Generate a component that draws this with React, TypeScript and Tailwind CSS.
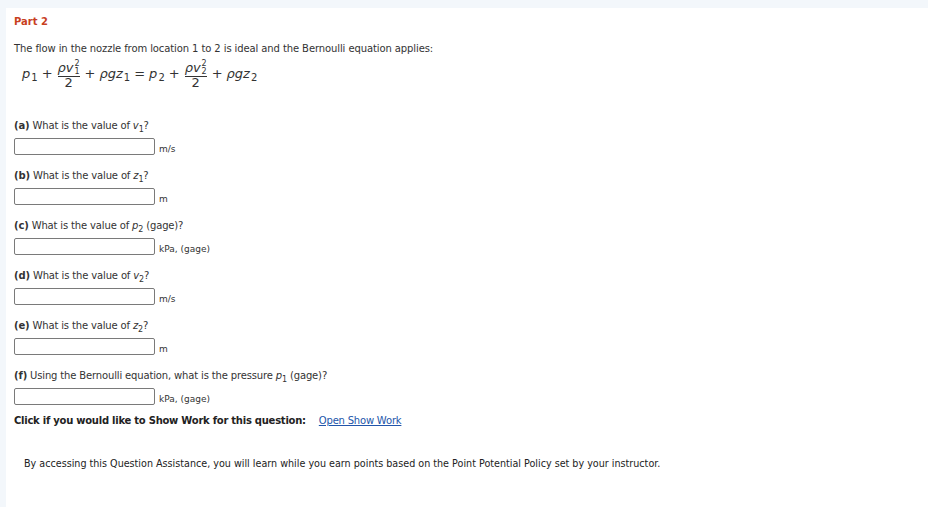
import React from "react";

const font = { fontFamily: '"DejaVu Sans", Verdana, sans-serif' };

function Frac({ sub }: { sub: string }) {
  return (
    <span className="inline-flex flex-col items-center mx-[1px] leading-none">
      <span className="flex items-end">
        <span className="italic leading-[13px]">ρv</span>
        <span className="inline-flex flex-col text-[8px] leading-[8px] ml-[1px] mb-[-2px]">
          <span>2</span>
          <span>{sub}</span>
        </span>
      </span>
      <span className="block h-px w-full bg-[#333] mt-[2px]" />
      <span className="leading-[12px]">2</span>
    </span>
  );
}

function Question({
  label,
  children,
  unit,
}: {
  label: string;
  children: React.ReactNode;
  unit: string;
}) {
  return (
    <div className="flex flex-col">
      <div className="h-[14px] leading-[14px] text-[10px] text-[#333] tracking-[-0.15px]">
        <span className="font-bold">({label})</span> {children}
      </div>
      <div className="flex items-end mt-[5px]">
        <div className="w-[141px] h-[17px] border border-[#7a7a7a] rounded-[2px] bg-white" />
        <span className="ml-[4px] text-[9px] text-[#333] leading-[10px] mb-[1px]">{unit}</span>
      </div>
    </div>
  );
}

function Sub({ v }: { v: string }) {
  return <span className="text-[8px] relative top-[3px]">{v}</span>;
}

function MSub({ v }: { v: string }) {
  return <span className="text-[10px] relative top-[3px] ml-[1px]">{v}</span>;
}

export default function App() {
  return (
    <div className="w-[928px] h-[507px] bg-[#f3f7fb] pt-[8px] pl-[6px]" style={font}>
      <div className="bg-white h-full pl-[8px] pt-[7px]">
        <div className="text-[10px] font-bold text-[#c8401e] leading-[14px]">Part 2</div>
        <div className="text-[10px] text-[#333] leading-[14px] mt-[13px] tracking-[-0.1px]">
          The flow in the nozzle from location 1 to 2 is ideal and the Bernoulli equation applies:
        </div>
        <div className="flex items-center text-[13px] text-[#333] ml-[8px] mt-[2px] h-[32px]">
          <span className="italic">p</span>
          <MSub v="1" />
          <span className="mx-[4px]">+</span>
          <Frac sub="1" />
          <span className="mx-[4px]">+</span>
          <span className="italic">ρgz</span>
          <MSub v="1" />
          <span className="mx-[4px]">=</span>
          <span className="italic">p</span>
          <MSub v="2" />
          <span className="mx-[4px]">+</span>
          <Frac sub="2" />
          <span className="mx-[4px]">+</span>
          <span className="italic">ρgz</span>
          <MSub v="2" />
        </div>
        <div className="flex flex-col gap-[14px] mt-[29px]">
          <Question label="a" unit="m/s">
            What is the value of <span className="italic">v</span>
            <Sub v="1" />?
          </Question>
          <Question label="b" unit="m">
            What is the value of <span className="italic">z</span>
            <Sub v="1" />?
          </Question>
          <Question label="c" unit="kPa, (gage)">
            What is the value of <span className="italic">p</span>
            <Sub v="2" /> (gage)?
          </Question>
          <Question label="d" unit="m/s">
            What is the value of <span className="italic">v</span>
            <Sub v="2" />?
          </Question>
          <Question label="e" unit="m">
            What is the value of <span className="italic">z</span>
            <Sub v="2" />?
          </Question>
          <Question label="f" unit="kPa, (gage)">
            Using the Bernoulli equation, what is the pressure <span className="italic">p</span>
            <Sub v="1" /> (gage)?
          </Question>
        </div>
        <div className="flex items-center mt-[9px] text-[10px] leading-[14px]">
          <span className="font-bold text-[#222] tracking-[-0.25px]">Click if you would like to Show Work for this question:</span>
          <span className="ml-[13px] text-[#2255aa] underline tracking-[-0.2px]">Open Show Work</span>
        </div>
        <div className="mt-[30px] ml-[10px] text-[9.6px] text-[#222] leading-[12px]">
          By accessing this Question Assistance, you will learn while you earn points based on the Point Potential Policy set by your instructor.
        </div>
      </div>
    </div>
  );
}
